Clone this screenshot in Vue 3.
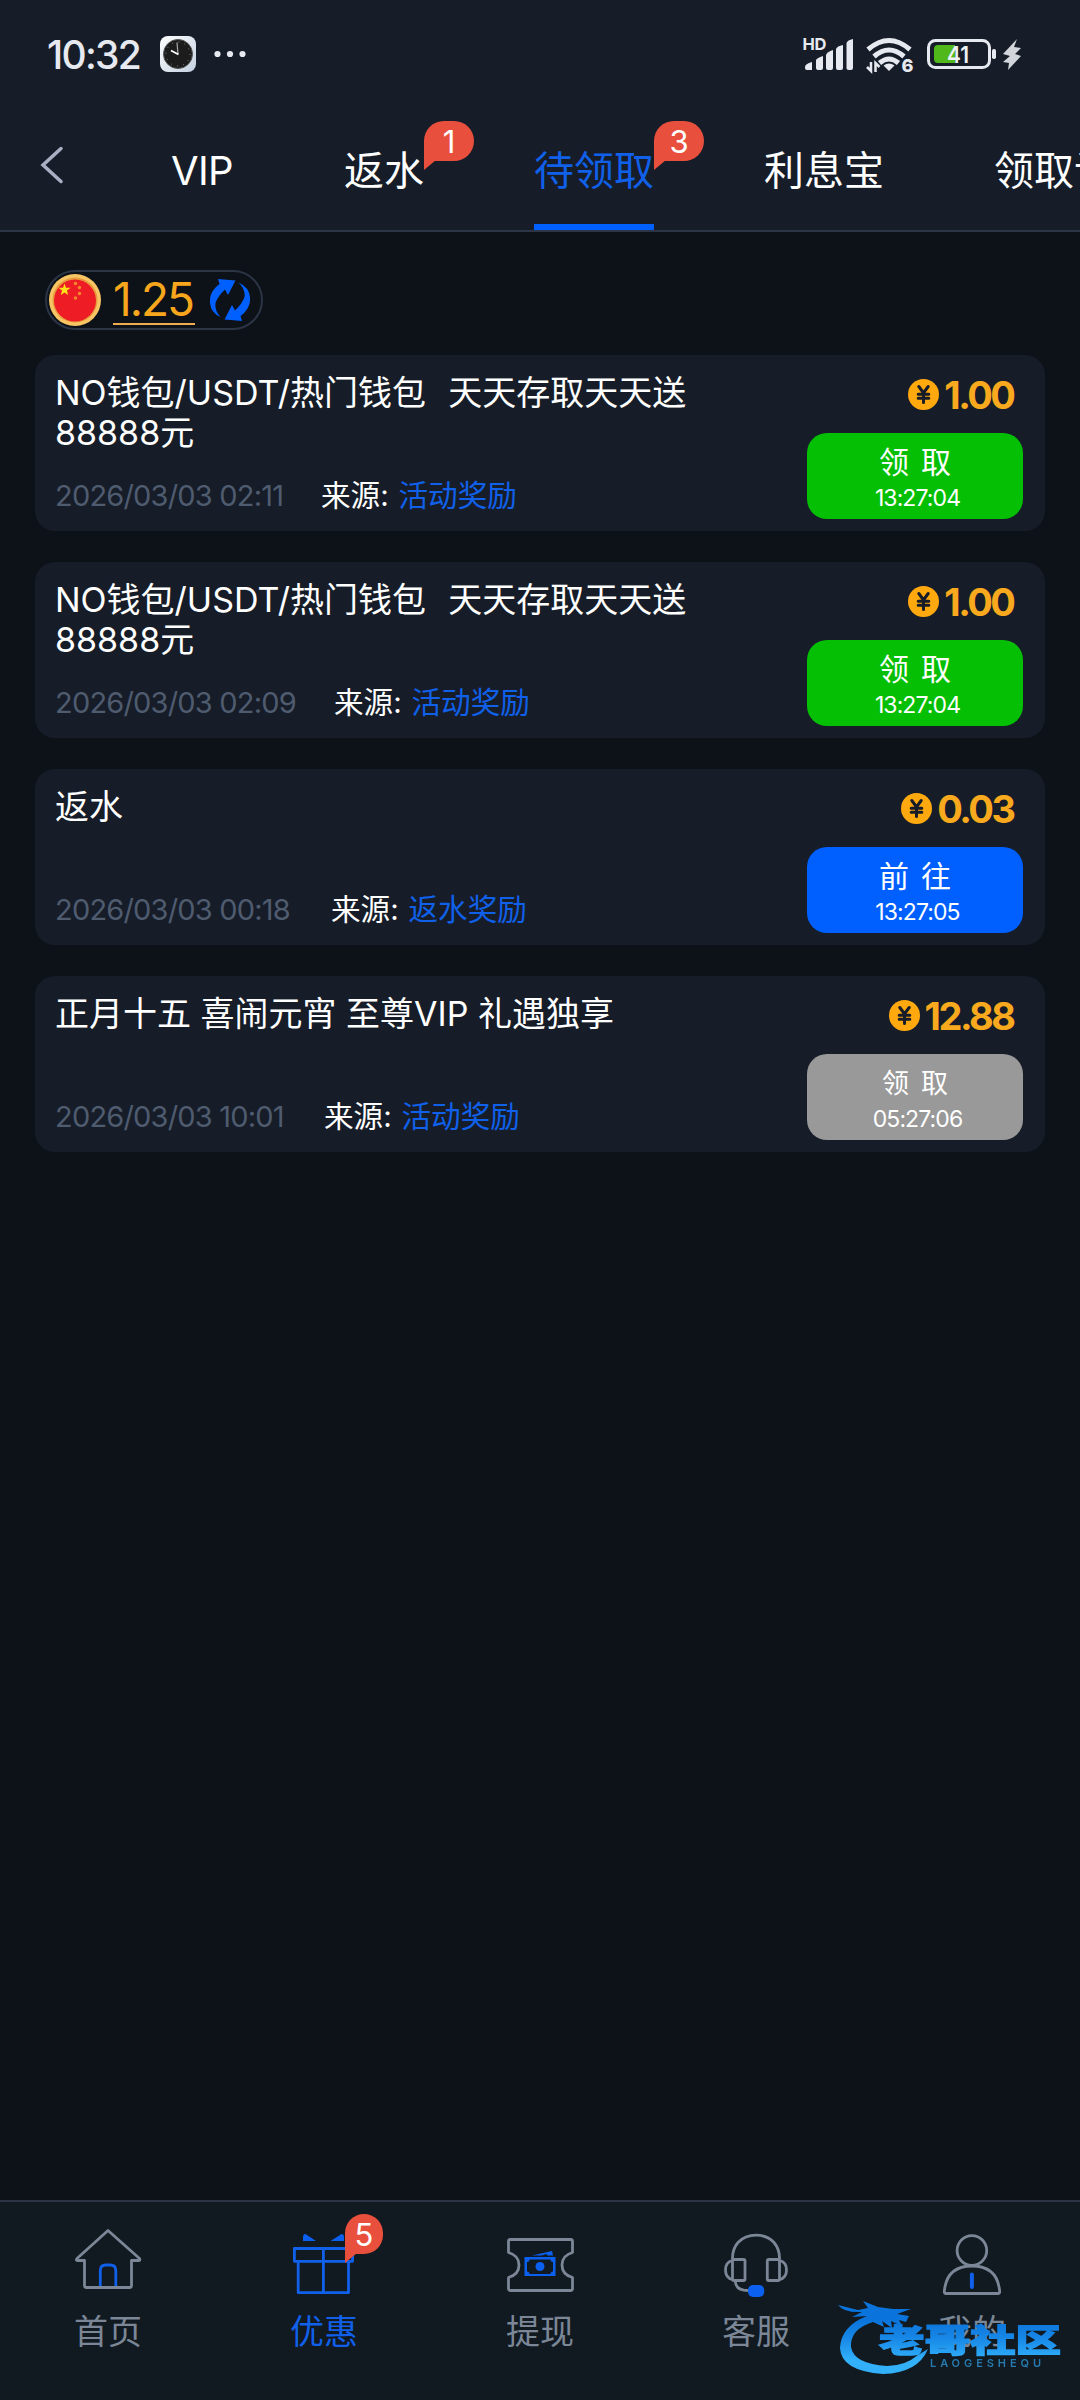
<script setup>
const tabs = [
  { label: 'VIP' },
  { label: '返水', badge: 1 },
  { label: '待领取', badge: 3, active: true },
  { label: '利息宝' },
  { label: '领取记录' },
]

const rewards = [
  { title: 'NO钱包/USDT/热门钱包\u00a0\u200a 天天存取天天送88888元', date: '2026/03/03 02:11', dateWidth: 266, source: '活动奖励', amount: '1.00', action: '领取', time: '13:27:04', tone: 'green' },
  { title: 'NO钱包/USDT/热门钱包\u00a0\u200a 天天存取天天送88888元', date: '2026/03/03 02:09', dateWidth: 279, source: '活动奖励', amount: '1.00', action: '领取', time: '13:27:04', tone: 'green' },
  { title: '返水', date: '2026/03/03 00:18', dateWidth: 276, source: '返水奖励', amount: '0.03', action: '前往', time: '13:27:05', tone: 'blue' },
  { title: '正月十五 喜闹元宵 至尊VIP 礼遇独享', date: '2026/03/03 10:01', dateWidth: 269, source: '活动奖励', amount: '12.88', action: '领取', time: '05:27:06', tone: 'gray' },
]

const nav = [
  { id: 'home', label: '首页' },
  { id: 'gift', label: '优惠', badge: 5, active: true },
  { id: 'cash', label: '提现' },
  { id: 'service', label: '客服' },
  { id: 'me', label: '我的' },
]
</script>

<template>
  <div class="screen">
    <header class="top">
      <div class="status">
        <span class="clock-text">10:32</span>
        <svg class="clock" viewBox="0 0 36 36">
          <defs>
            <linearGradient id="clockFace" x1="0" y1="0" x2="1" y2="1">
              <stop offset="0" stop-color="#fff" /><stop offset="1" stop-color="#c3d0e0" />
            </linearGradient>
          </defs>
          <rect width="36" height="36" rx="8" fill="url(#clockFace)" />
          <circle cx="18" cy="18" r="14.5" fill="#1c1c1c" stroke="#555" stroke-width="1" />
          <circle cx="18" cy="18" r="12" fill="none" stroke="#888" stroke-width="1" stroke-dasharray="1 5.28" />
          <path d="M18 18L17 6.5" stroke="#aaa" stroke-width="1.2" />
          <path d="M18.5 18.5L11 14.5" stroke="#fff" stroke-width="1.8" />
        </svg>
        <svg class="dots" viewBox="0 0 32 8">
          <circle cx="3.5" cy="4" r="3.1" /><circle cx="16" cy="4" r="3.1" /><circle cx="28.5" cy="4" r="3.1" />
        </svg>
        <svg class="indicators" viewBox="800 30 225 48">
          <g fill="#e6e9ef">
            <text x="802.5" y="50.3" font-size="16.5" font-weight="700" textLength="24">HD</text>
            <path d="M805 67q0-3 7-5v8h-5q-2 0-2-2z" />
            <path d="M816 60q1-2 7-4v12q0 2-2 2h-3q-2 0-2-2z" />
            <path d="M826 55q1-3 7-5v18q0 2-2 2h-3q-2 0-2-2z" />
            <path d="M836 49q1-3 7-4v23q0 2-2 2h-3q-2 0-2-2z" />
            <path d="M846.500 43q1-3 6.500-4v29q0 2-2 2h-2.500q-2 0-2-2z" />
            <path d="M889 71l-5.500-5.500q5.500-4 11 0z" />
            <path d="M871 62v9l-4-4M875.500 72v-9l4 4" fill="none" stroke="#e6e9ef" stroke-width="2.500" />
            <text x="901.500" y="72" font-size="18" font-weight="800">6</text>
          </g>
          <g fill="none" stroke="#e6e9ef" stroke-width="5">
            <path d="M868 49.500q21-18 42 0" />
            <path d="M874 56.500q15-13 30 0" />
            <path d="M879.500 63q9.500-8 19 0" />
          </g>
          <rect x="928.500" y="40.500" width="61" height="27" rx="7" fill="none" stroke="#e6e9ef" stroke-width="3" />
          <path d="M938 45h17v18h-17q-4 0-4-4V49q0-4 4-4z" fill="#50b81a" />
          <rect x="992" y="49" width="4" height="10" rx="1.800" fill="#e6e9ef" />
          <text x="947" y="62.500" font-size="23.500" font-weight="600" fill="#eef1f5" textLength="22" lengthAdjust="spacingAndGlyphs">41</text>
          <path d="M1017 39L1003 54l7 2-7 6 6 1 -1 7 13-14-6-2 6-6-7-1z" fill="#d2d5da" />
        </svg>
      </div>

      <nav class="tabbar">
        <svg class="back" viewBox="0 0 24 38"><path d="M21 2.500L3 19l18 16.500" /></svg>
        <div class="tabs">
          <div v-for="t in tabs" :key="t.label" class="tab" :class="{ active: t.active, latin: t.label === 'VIP' }">
            {{ t.label }}
            <span v-if="t.badge" class="bubble">{{ t.badge }}</span>
          </div>
        </div>
      </nav>
    </header>

    <main>
      <div class="wallet">
        <svg class="flag" viewBox="0 0 52 52">
          <circle cx="26" cy="26" r="26" fill="#f8c564" />
          <circle cx="26" cy="26" r="22.500" fill="#e79a3b" />
          <circle cx="26" cy="26.500" r="21" fill="#ee1c25" />
          <path d="M15.500 9.500l1.500 4.200h4.600l-3.700 2.800 1.300 4.500-3.700-2.600-3.700 2.600 1.300-4.500-3.700-2.800h4.600z" fill="#ffe11a" />
          <g fill="#f58a2c"><circle cx="26.500" cy="9.500" r="1.700" /><circle cx="30.500" cy="13.500" r="1.700" /><circle cx="30.500" cy="19.500" r="1.700" /><circle cx="26.500" cy="24" r="1.700" /></g>
        </svg>
        <span class="balance">1.25</span>
        <svg class="refresh" viewBox="0 0 40 42">
          <path d="M8 0L25.500 1.500 18 16l-3-5.500Q8 17 5.500 24q-1 8 5 14Q-1 33 0 20 1 11 9.500 5z" />
          <path d="M32 42L14.500 40.500 22 26l3 5.500Q32 25 34.500 18q1-8-6-14.500Q41 9 40 22 39 31 30.500 37z" />
        </svg>
      </div>

      <article v-for="(r, i) in rewards" :key="i" class="card">
        <div class="info">
          <h3>{{ r.title }}</h3>
          <div class="meta">
            <time :style="{ width: r.dateWidth + 'px' }">{{ r.date }}</time>
            <span class="from">来源:</span>
            <span class="source">{{ r.source }}</span>
          </div>
        </div>
        <div class="side">
          <div class="amount">
            <svg viewBox="0 0 31 31">
              <circle cx="15.500" cy="15.500" r="15.500" fill="#ffa90f" />
              <path d="M10.800 7.500l4.700 6.500 4.700-6.500M15.500 13.500v10M10.200 15.300h10.600M10.200 19.300h10.600" />
            </svg>
            <b>{{ r.amount }}</b>
          </div>
          <button :class="r.tone">
            <span class="act">{{ r.action }}</span>
            <span class="left">{{ r.time }}</span>
          </button>
        </div>
      </article>
    </main>

    <footer>
      <div v-for="n in nav" :key="n.id" class="item" :class="{ active: n.active }">
        <svg viewBox="0 0 76 76">
          <template v-if="n.id === 'home'">
            <path d="M14.500 36.500H8q-2.500 0-1-2L38 6.500 69.500 34.500q1 2-1 2H61.500V61.500q0 2-2 2H16.500q-2 0-2-2Z" />
            <path class="accent" d="M30.300 62V46.500q0-5.500 5.500-5.500h4.500q5.500 0 5.500 5.500V62" />
          </template>
          <template v-else-if="n.id === 'gift'">
            <path class="fill" d="M17 17V12.500q1-4 4-1.500L30 17zM58 17V12.500q-1-4-4-1.500L44.500 17z" />
            <path class="accent" d="M8.400 24.500H66.600V37.300H8.400zM12.200 37.300V68.700H62.500V37.300M37.400 24.500V68.700" />
          </template>
          <template v-else-if="n.id === 'cash'">
            <path d="M6.500 28.500V17.500q0-2 2-2H68.500q2 0 2 2V28.500Q60 31.500 60 41T70.500 53.500V64.500q0 2-2 2H8.500q-2 0-2-2V53.500Q17 50.500 17 41T6.500 28.500Z" />
            <rect class="fill" x="22.500" y="33" width="31" height="19" />
            <path fill="#111921" stroke="none" d="M27.500 35.500h21q0 2.500 2.500 2.500v9.500q-2.500 0-2.500 2.500h-21q0-2.500-2.500-2.500v-9.500q2.500 0 2.500-2.500z" />
            <circle class="fill" cx="38" cy="42.500" r="4.500" />
            <path class="fill" d="M30 31.500L50 27l1 4.500h-5.500l-1-1.500-5 1.500z" />
          </template>
          <template v-else-if="n.id === 'service'">
            <path d="M14.500 35V34Q14.500 25 20 18.500 27 11.200 38 11.200T56 18.500Q61.500 25 61.500 34V35" />
            <rect x="14.500" y="35.500" width="12.500" height="21" rx="1.500" /><rect x="49.300" y="35.500" width="12.200" height="21" rx="1.500" />
            <path d="M14.500 36.500Q7.500 38 7.500 46T14.500 55.500M61.500 36.500Q68.500 38 68.500 46T61.500 55.500M17.300 57.500Q18 66.500 30 66.500" />
            <rect class="fill" x="30" y="61" width="16.200" height="12" rx="5" />
          </template>
          <template v-else>
            <circle cx="37.900" cy="26.500" r="14.800" />
            <path d="M12 69.500Q10.300 69.500 10.300 67.500 12.500 42 38 42T65.700 67.500Q65.700 69.500 64 69.500Z" />
            <path class="accent tie" d="M37.900 50.500V63" />
          </template>
        </svg>
        <span class="label">{{ n.label }}</span>
        <span v-if="n.badge" class="bubble small">{{ n.badge }}</span>
      </div>
    </footer>

    <svg class="mark" viewBox="0 0 230 84">
      <defs>
        <linearGradient id="markBlue" gradientUnits="userSpaceOnUse" x1="0" y1="22" x2="0" y2="62">
          <stop offset="0" stop-color="#0b74dc" /><stop offset=".45" stop-color="#1787e6" /><stop offset="1" stop-color="#32b0fa" />
        </linearGradient>
      </defs>
      <g fill="url(#markBlue)">
        <path d="M31 18Q5 28 4 50 5 73 47 76 82 75 92 51L82 57Q69 68 51 68 18 66 15 49 14 31 37 24L48 29 46 23 56 30 55 23 66 28 63 22 70 24 73 18 61 16 75 11 57 11 42 9 27 3 32 10 22 12 2 7Q8 15 26 14L16 19Z" />
        <text x="43" y="53.500" font-size="31.500" font-weight="900" stroke="url(#markBlue)" stroke-width="1.300" textLength="182" lengthAdjust="spacingAndGlyphs">老哥社区</text>
        <text x="94" y="68.500" font-size="11" opacity=".65" font-weight="600" textLength="111">LAOGESHEQU</text>
      </g>
    </svg>
  </div>
</template>

<style>
body { background: #0d1118; }
</style>

<style scoped>
.screen {
  position: relative;
  width: 1080px;
  height: 2400px;
  overflow: hidden;
  display: flex;
  flex-direction: column;
  background: #0d1118;
  color: #fff;
  font-family: Inter, "Noto Sans CJK SC", sans-serif;
}
.screen * { box-sizing: border-box; }
svg { display: block; flex: none; }
.top { height: 232px; background: #161d28; border-bottom: 2px solid #2b3546; }
.status { height: 108px; display: flex; align-items: center; padding-left: 47px; }
.clock-text { width: 113px; font-size: 39px; font-weight: 500; letter-spacing: -1.7px; color: #e6e9ef; white-space: nowrap; }
.clock { width: 36px; height: 36px; }
.dots { width: 32px; height: 8px; margin-left: 17.500px; fill: #e6e9ef; }
.indicators { width: 225px; height: 48px; margin-left: 554.500px; }
.tabbar { height: 122px; display: flex; }
.back { width: 24px; height: 38px; margin: 38px 0 0 40px; fill: none; stroke: #a9b0c3; stroke-width: 3.500; stroke-linecap: round; }
.tabs { display: flex; gap: 110px; margin-left: 106px; }
.tab { position: relative; flex: none; height: 122px; line-height: 126px; font-size: 40px; white-space: nowrap; }
.tab.latin { width: 64px; letter-spacing: -.7px; padding-left: 1px; }
.tab.active { color: #1060ea; border-bottom: 6px solid #005fff; }
.bubble {
  position: absolute;
  left: 100%;
  top: 13px;
  width: 50px;
  height: 40px;
  border-radius: 20px 20px 20px 0;
  background: #e94f3d;
  color: #fff;
  font-size: 31px;
  line-height: 41px;
  text-align: center;
}
.bubble::after { content: ""; position: absolute; left: 0; top: 39px; width: 12px; height: 10px; background: #e94f3d; clip-path: polygon(0 0, 100% 0, 0 100%); }
main { flex: 1; padding: 38px 35px 0; }
.wallet { width: 218px; height: 60px; margin: 0 0 25px 10px; border: 2px solid #2b3546; border-radius: 30px; display: flex; align-items: center; padding-left: 2px; }
.flag { width: 52px; height: 52px; }
.balance { width: 82px; height: 49px; margin: 0 15px 0 12px; line-height: 47px; border-bottom: 2px solid #f0aa50; color: #f8a71c; font-size: 46px; letter-spacing: -2px; white-space: nowrap; }
.refresh { width: 40px; height: 42px; fill: #005fff; }
.card { height: 176px; margin-bottom: 31px; border-radius: 20px; background: #161d28; display: flex; justify-content: space-between; }
.info { width: 660px; padding: 18px 0 0 20px; display: flex; flex-direction: column; }
h3 { margin: 0; height: 100px; font-size: 34px; line-height: 40px; font-weight: 400; letter-spacing: 0; }
.meta { display: flex; height: 44px; line-height: 44px; font-size: 29.600px; white-space: nowrap; }
time { flex: none; color: #4f5b6f; font-size: 29px; line-height: 46px; letter-spacing: -.8px; }
.from { width: 77.5px; }
.source { color: #1060ea; }
.side { width: 216px; margin-right: 22px; }
.amount { height: 79px; display: flex; justify-content: flex-end; align-items: center; padding-right: 9.5px; gap: 5px; color: #f9a91d; }
.amount svg { width: 31px; height: 31px; }
.amount path { fill: none; stroke: #161d28; stroke-width: 3; stroke-linecap: round; }
.amount b { font-size: 38px; font-weight: 700; letter-spacing: -2.5px; line-height: 1; }
button { width: 216px; height: 86px; margin-top: -1px; padding: 10px 0 0; border: 0; border-radius: 20px; color: #fff; font-family: inherit; display: flex; flex-direction: column; align-items: center; }
.green { background: #05bf05; }
.blue { background: #005fff; }
.gray { background: #999; }
.act { font-size: 30px; line-height: 38px; letter-spacing: 12px; margin-right: -12px; }
.gray .act { font-size: 27px; line-height: 39px; }
.left { font-size: 23px; line-height: 35px; letter-spacing: -.9px; margin-left: 5px; }
.gray .left { line-height: 33px; }
footer { height: 200px; flex: none; border-top: 2px solid #2b3546; background: #111921; display: flex; }
.item { position: relative; width: 216px; display: flex; flex-direction: column; align-items: center; padding-top: 22px; color: #7b8797; }
.item > svg { width: 76px; height: 76px; fill: none; stroke: #7b8797; stroke-width: 2.800; stroke-linejoin: round; }
.item .accent { stroke: #1060ea; stroke-linecap: butt; }
.item .tie { stroke-width: 4; stroke-linecap: round; }
.item .fill { fill: #0b60f0; stroke: none; }
.label { font-size: 34px; line-height: 40px; margin-top: 12px; }
.item.active { color: #1060ea; }
.bubble.small { left: 129px; top: 12px; width: 38px; border-radius: 19px 19px 19px 0; }
.mark { position: absolute; left: 836px; top: 2298px; width: 230px; height: 84px; filter: blur(.5px); }
</style>
